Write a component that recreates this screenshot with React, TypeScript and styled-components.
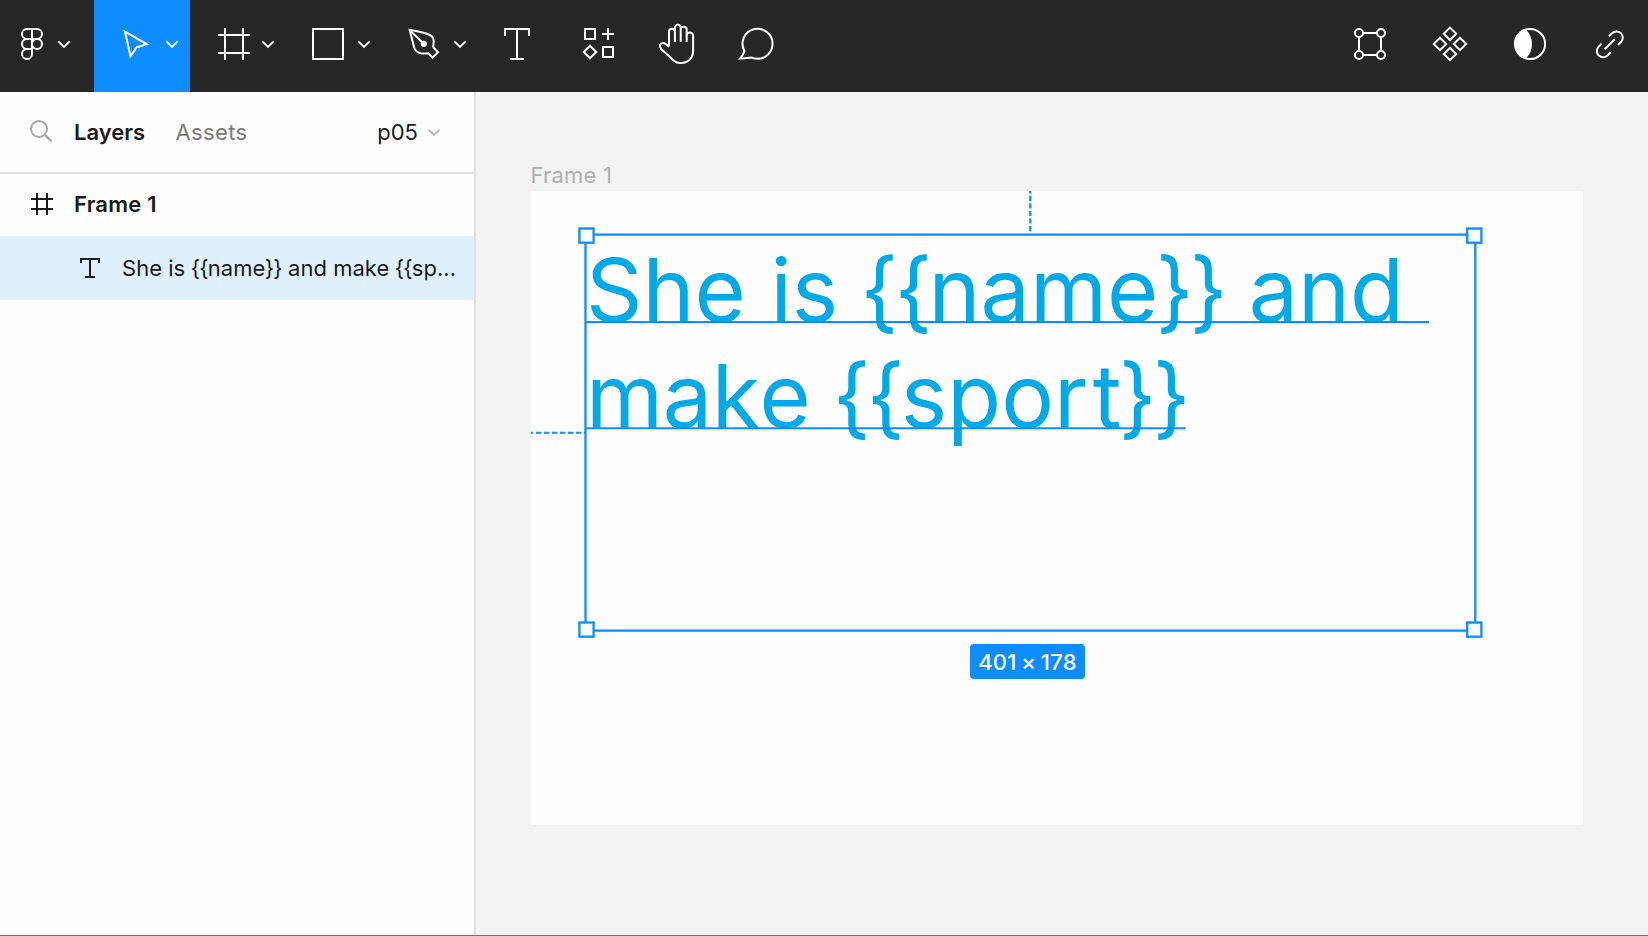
import React from "react";
import styled, { createGlobalStyle } from "styled-components";

const GlobalStyle = createGlobalStyle`
  * { box-sizing: border-box; }
  body {
    margin: 0;
    font-family: Inter, "Liberation Sans", sans-serif;
    overflow: hidden;
  }
`;

const BLUE = "#0d8dff";

const Shell = styled.div`
  display: flex;
  flex-direction: column;
  width: 1648px;
  height: 936px;
  border-bottom: 1px solid #707070;
  background: #f3f3f3;
`;

const Toolbar = styled.header`
  display: flex;
  justify-content: space-between;
  flex: none;
  height: 92px;
  background: #272727;
`;

const ToolGroup = styled.div`
  display: flex;
`;

const Tool = styled.button<{ $width: number; $active?: boolean }>`
  display: block;
  width: ${(p) => p.$width}px;
  height: 92px;
  padding: 0;
  border: 0;
  color: #fff;
  background: ${(p) => (p.$active ? BLUE : "transparent")};
`;

const ToolIcon = styled.svg`
  display: block;
  width: 100%;
  height: 92px;
  fill: none;
  stroke: currentColor;
  stroke-width: 2;
  stroke-miterlimit: 10;
`;

const Body = styled.div`
  display: flex;
  flex: 1;
  min-height: 0;
`;

const Panel = styled.aside`
  flex: none;
  width: 476px;
  border-right: 2px solid #e1e1e1;
  background: #fefefe;
  color: #1a1a1a;
  font-size: 22px;
`;

const PanelHeader = styled.div`
  display: flex;
  align-items: center;
  height: 82px;
  padding: 0 34px 0 30px;
  border-bottom: 2px solid #e1e1e1;
`;

const Tab = styled.span<{ $active?: boolean }>`
  margin-right: ${(p) => (p.$active ? 30.5 : 0)}px;
  font-weight: ${(p) => (p.$active ? 600 : 400)};
  color: ${(p) => (p.$active ? "#1a1a1a" : "#7b7b7b")};
  letter-spacing: ${(p) => (p.$active ? "0" : "0.35px")};
`;

const PageName = styled.span`
  margin-left: auto;
  margin-right: 10px;
`;

const SmallIcon = styled.svg<{ $gap?: number }>`
  flex: none;
  display: block;
  margin-right: ${(p) => p.$gap ?? 0}px;
  fill: none;
  stroke: currentColor;
  stroke-width: 2;
`;

const LayerRow = styled.div<{ $selected?: boolean }>`
  display: flex;
  align-items: center;
  height: ${(p) => (p.$selected ? 64 : 62)}px;
  padding: ${(p) => (p.$selected ? "0 18px 0 80px" : "0 18px 2px 31px")};
  background: ${(p) => (p.$selected ? "#dff1fe" : "transparent")};
  font-weight: ${(p) => (p.$selected ? 400 : 600)};
`;

const LayerName = styled.span<{ $spacing: number }>`
  letter-spacing: ${(p) => p.$spacing}px;
  white-space: nowrap;
`;

const Tracked = styled.span<{ $em: number }>`
  letter-spacing: ${(p) => p.$em}em;
`;

const Canvas = styled.main`
  position: relative;
  flex: 1;
  overflow: hidden;
`;

const FrameLabel = styled.div`
  position: absolute;
  left: 54.5px;
  top: 70px;
  font-size: 22px;
  line-height: 27px;
  letter-spacing: 0.2px;
  color: #b0b0b0;
`;

const Artboard = styled.div`
  position: absolute;
  left: 55px;
  top: 99px;
  width: 1052px;
  height: 633.5px;
  background: #fefefe;
`;

const TextNode = styled.div`
  position: absolute;
  left: 55px;
  top: 46px;
  font-size: 88px;
  line-height: 106.2px;
  font-kerning: none;
  color: #00a9e8;
  white-space: pre;
`;

const Overlay = styled.svg`
  position: absolute;
  left: 0;
  top: 0;
  fill: none;
  stroke: ${BLUE};
  stroke-width: 2.3;
`;

const SizeBadge = styled.div`
  position: absolute;
  left: 439px;
  top: 453px;
  width: 115px;
  height: 34.5px;
  border-radius: 4px;
  background: ${BLUE};
  color: #fff;
  font-size: 22px;
  font-weight: 500;
  line-height: 36px;
  letter-spacing: 0.25px;
  word-spacing: -1.5px;
  text-align: center;
  white-space: nowrap;
`;

const Chevron = ({ x }: { x: number }) => (
  <path d={`M${x - 5.6} 41.3l5.6 5.6 5.6-5.6`} strokeWidth="1.8" />
);

// Sets double braces tight, including the gap to the character before them.
const Template = ({ text }: { text: string }) => (
  <>
    {text.split(/(.(?:\{\{|\}\}))/).map((part, i) =>
      i % 2 ? (
        <React.Fragment key={i}>
          <Tracked $em={-0.028}>{part[0]}</Tracked>
          <Tracked $em={-0.04}>{part.slice(1)}</Tracked>
        </React.Fragment>
      ) : (
        part
      ),
    )}
  </>
);

const HANDLES = [
  [48.4, 37.5],
  [936.2, 37.5],
  [48.4, 431.5],
  [936.2, 431.5],
];

export default function App() {
  return (
    <Shell>
      <GlobalStyle />
      <Toolbar>
        <ToolGroup>
          <Tool $width={94} aria-label="Main menu">
            <ToolIcon>
              <path d="M32 29h-5a5 5 0 0 0 0 10h5zM32 29h5a5 5 0 0 1 0 10h-5zM32 39h-5a5 5 0 0 0 0 10h5zM32 49h-5a5 5 0 1 0 5 5z" />
              <circle cx="37" cy="44" r="5" />
              <Chevron x={64} />
            </ToolIcon>
          </Tool>
          <Tool $width={96} $active aria-label="Move">
            <ToolIcon>
              <path d="M31 31.7L53 44.3 42.8 47.2 36.5 56z" />
              <Chevron x={78} />
            </ToolIcon>
          </Tool>
          <Tool $width={96} aria-label="Frame">
            <ToolIcon>
              <path d="M35 28v32M53 28v32M28 35h32M28 53h32" />
              <Chevron x={78} />
            </ToolIcon>
          </Tool>
          <Tool $width={96} aria-label="Rectangle">
            <ToolIcon>
              <rect x="27" y="29" width="30" height="30" />
              <Chevron x={78} />
            </ToolIcon>
          </Tool>
          <Tool $width={96} aria-label="Pen">
            <ToolIcon>
              <path d="M27.7 29.9C36 31.5 43.5 32.8 48.2 35.1C52 37.2 52.2 41 51.4 44.5C51.2 46 51.3 47.2 51.8 47.8L56 52.2 50.5 57.6 46.2 53.3C44 53.6 41.5 53.9 38.5 53.3C35.5 52.6 33.2 50.5 32.2 47.5C30.6 42 29.4 36.5 27.7 29.9z" />
              <path d="M27.2 29.6L41.7 43.7" />
              <circle cx="41.8" cy="43.8" r="3.1" fill="currentColor" stroke="none" />
              <Chevron x={78} />
            </ToolIcon>
          </Tool>
          <Tool $width={80} aria-label="Text">
            <ToolIcon>
              <path d="M27 36v-7h24v7M39 29v30M32 59h14" />
            </ToolIcon>
          </Tool>
          <Tool $width={80} aria-label="Resources">
            <ToolIcon>
              <path d="M27 29h10v10h-10zM45 47h10v10h-10zM50 28v12M44 34h12M32 45.7l6.3 6.3-6.3 6.3-6.3-6.3z" />
            </ToolIcon>
          </Tool>
          <Tool $width={80} aria-label="Hand">
            <ToolIcon>
              <path d="M31 46.6V31.6a2.9 2.9 0 0 1 5.9 0V42M36.9 32V27.7a2.9 2.9 0 0 1 5.8 0V42M42.7 29.7a3 3 0 0 1 6 0V42M48.7 35.8a3.2 3.2 0 0 1 6.4 0V51.5A11.5 11.5 0 0 1 43.6 63H42C39.5 63 37.6 62.2 36 60.7L23.2 49C20.5 46 22 43 25.2 43C27.5 43 29 45.5 31 46.6" />
            </ToolIcon>
          </Tool>
          <Tool $width={80} aria-label="Comment">
            <ToolIcon>
              <path d="M26.4 51A15 15 0 1 1 33.5 57.5C30 57.6 26 58.6 22 58.6C24 56.500 25.800 54.500 26.400 51z" />
            </ToolIcon>
          </Tool>
        </ToolGroup>
        <ToolGroup>
          <Tool $width={80} aria-label="Edit object">
            <ToolIcon>
              <circle cx="29" cy="33" r="4" />
              <circle cx="51" cy="33" r="4" />
              <circle cx="29" cy="55" r="4" />
              <circle cx="51" cy="55" r="4" />
              <path d="M33 33h14M33 55h14M29 37v14M51 37v14" />
            </ToolIcon>
          </Tool>
          <Tool $width={80} aria-label="Create component">
            <ToolIcon>
              <path d="M40 27.6l6.2 6.2-6.2 6.2-6.2-6.2zM30 37.7l6.2 6.2-6.2 6.2-6.2-6.2zM50 37.7l6.2 6.2-6.2 6.2-6.2-6.2zM40 47.8l6.2 6.2-6.2 6.2-6.2-6.2z" />
            </ToolIcon>
          </Tool>
          <Tool $width={80} aria-label="Mask">
            <ToolIcon>
              <circle cx="40" cy="44" r="15.1" />
              <path
                d="M35.5 29.4C39.5 32.5 42 38 42 44S39.5 55.5 35.5 58.6A15.3 15.3 0 0 1 35.5 29.4z"
                fill="currentColor"
                stroke="none"
              />
            </ToolIcon>
          </Tool>
          <Tool $width={78} aria-label="Link">
            <ToolIcon>
              <path d="M39 36.3l3-3A6.2 6.2 0 0 1 51 42l-3 3M40.6 52.3l-3 3A6.2 6.2 0 0 1 28.6 46.6l3-3M34.7 49.3l10-10" />
            </ToolIcon>
          </Tool>
        </ToolGroup>
      </Toolbar>
      <Body>
        <Panel>
          <PanelHeader>
            <SmallIcon width="22" height="24" $gap={22} color="#a8a8a8">
              <circle cx="9" cy="9" r="8" />
              <path d="M14.7 14.7l7 7" strokeWidth="2.4" />
            </SmallIcon>
            <Tab $active>Layers</Tab>
            <Tab>Assets</Tab>
            <PageName>p05</PageName>
            <SmallIcon width="12" height="8" color="#b3b3b3">
              <path d="M.5 1.8l5.500 5 5.500-5" strokeWidth="1.8" />
            </SmallIcon>
          </PanelHeader>
          <LayerRow>
            <SmallIcon width="22" height="22" $gap={21}>
              <path d="M6 0v22M16 0v22M0 6h22M0 16h22" />
            </SmallIcon>
            <LayerName $spacing={0.2}>Frame 1</LayerName>
          </LayerRow>
          <LayerRow $selected>
            <SmallIcon width="20" height="20" $gap={22}>
              <path d="M1 5V1h18v4M10 1v18M5 19h10" />
            </SmallIcon>
            <LayerName $spacing={0.03}>
              <Template text="She is {{name}} and make {{sp..." />
            </LayerName>
          </LayerRow>
        </Panel>
        <Canvas>
          <FrameLabel>Frame 1</FrameLabel>
          <Artboard>
            <TextNode>
              <Template text={"She is {{name}} and\n"} />
              <Tracked $em={-0.0045}>make</Tracked>
              <Template text=" {{spo" />
              <Tracked $em={0.065}>r</Tracked>
              <Template text="t}}" />
            </TextNode>
            <Overlay width="1052" height="633">
              <path d="M55 131h843M55 237.2h599.7" strokeWidth="2" />
              <path d="M499.3 -2.7V41" strokeDasharray="5.2 2.33" />
              <path d="M-3 241.7H54" strokeDasharray="5.3 2.7" strokeWidth="2" />
              <rect x="54.5" y="43.6" width="889.8" height="396" />
              {HANDLES.map(([x, y]) => (
                <rect key={`${x}-${y}`} x={x} y={y} width="14.2" height="14.2" fill="#fdfdfd" />
              ))}
            </Overlay>
            <SizeBadge>401 × 178</SizeBadge>
          </Artboard>
        </Canvas>
      </Body>
    </Shell>
  );
}
